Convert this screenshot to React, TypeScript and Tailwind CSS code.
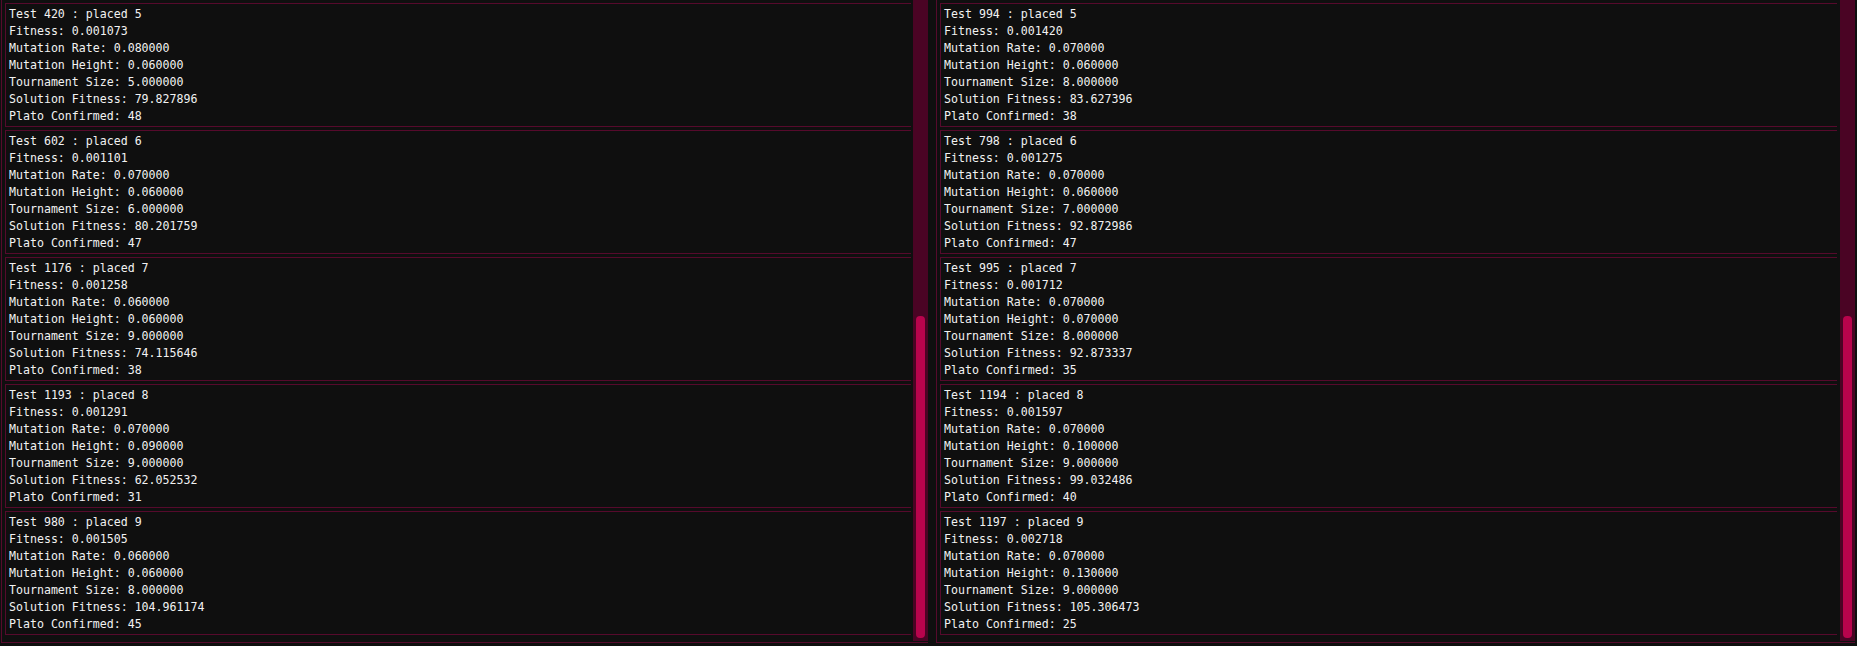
import React from "react";

type Item = {
  id: number;
  placed: number;
  fitness: string;
  rate: string;
  height: string;
  size: string;
  sol: string;
  plato: number;
};

const left: Item[] = [
  { id: 420, placed: 5, fitness: "0.001073", rate: "0.080000", height: "0.060000", size: "5.000000", sol: "79.827896", plato: 48 },
  { id: 602, placed: 6, fitness: "0.001101", rate: "0.070000", height: "0.060000", size: "6.000000", sol: "80.201759", plato: 47 },
  { id: 1176, placed: 7, fitness: "0.001258", rate: "0.060000", height: "0.060000", size: "9.000000", sol: "74.115646", plato: 38 },
  { id: 1193, placed: 8, fitness: "0.001291", rate: "0.070000", height: "0.090000", size: "9.000000", sol: "62.052532", plato: 31 },
  { id: 980, placed: 9, fitness: "0.001505", rate: "0.060000", height: "0.060000", size: "8.000000", sol: "104.961174", plato: 45 },
];

const right: Item[] = [
  { id: 994, placed: 5, fitness: "0.001420", rate: "0.070000", height: "0.060000", size: "8.000000", sol: "83.627396", plato: 38 },
  { id: 798, placed: 6, fitness: "0.001275", rate: "0.070000", height: "0.060000", size: "7.000000", sol: "92.872986", plato: 47 },
  { id: 995, placed: 7, fitness: "0.001712", rate: "0.070000", height: "0.070000", size: "8.000000", sol: "92.873337", plato: 35 },
  { id: 1194, placed: 8, fitness: "0.001597", rate: "0.070000", height: "0.100000", size: "9.000000", sol: "99.032486", plato: 40 },
  { id: 1197, placed: 9, fitness: "0.002718", rate: "0.070000", height: "0.130000", size: "9.000000", sol: "105.306473", plato: 25 },
];

function Entry({ it }: { it: Item }) {
  return (
    <div className="h-[124px] shrink-0 border-l border-t border-b border-[#560a2c] pl-[3px] pt-[2px] text-[11.6px] leading-[17px] text-[#f2f2f2] whitespace-pre">
      <div>{`Test ${it.id} : placed ${it.placed}`}</div>
      <div>{`Fitness: ${it.fitness}`}</div>
      <div>{`Mutation Rate: ${it.rate}`}</div>
      <div>{`Mutation Height: ${it.height}`}</div>
      <div>{`Tournament Size: ${it.size}`}</div>
      <div>{`Solution Fitness: ${it.sol}`}</div>
      <div>{`Plato Confirmed: ${it.plato}`}</div>
    </div>
  );
}

function Panel({ items, itemW, gap }: { items: Item[]; itemW: string; gap: string }) {
  return (
    <div className="flex h-[643px] border-l border-b border-[#560a2c] pl-[3px]">
      <div className={`${itemW} flex flex-col gap-[3px] pt-[3px] overflow-hidden`}>
        {items.map((it) => (
          <Entry key={it.id} it={it} />
        ))}
      </div>
      <div className={`${gap} h-[641px] w-[15px] bg-[#4a0424] flex flex-col`}>
        <div className="flex-1" />
        <div className="ml-[3px] mb-[3px] h-[322px] w-[9px] rounded-[4px] bg-[#b8044c]" />
      </div>
    </div>
  );
}

export default function App() {
  return (
    <div
      className="flex h-[646px] w-[1857px] overflow-hidden bg-[#0f0f0f] pl-[1px]"
      style={{ fontFamily: '"DejaVu Sans Mono", "Liberation Mono", monospace' }}
    >
      <Panel items={left} itemW="w-[906px]" gap="ml-[2px]" />
      <div className="w-[8px] shrink-0" />
      <Panel items={right} itemW="w-[897px]" gap="ml-[3px]" />
    </div>
  );
}
